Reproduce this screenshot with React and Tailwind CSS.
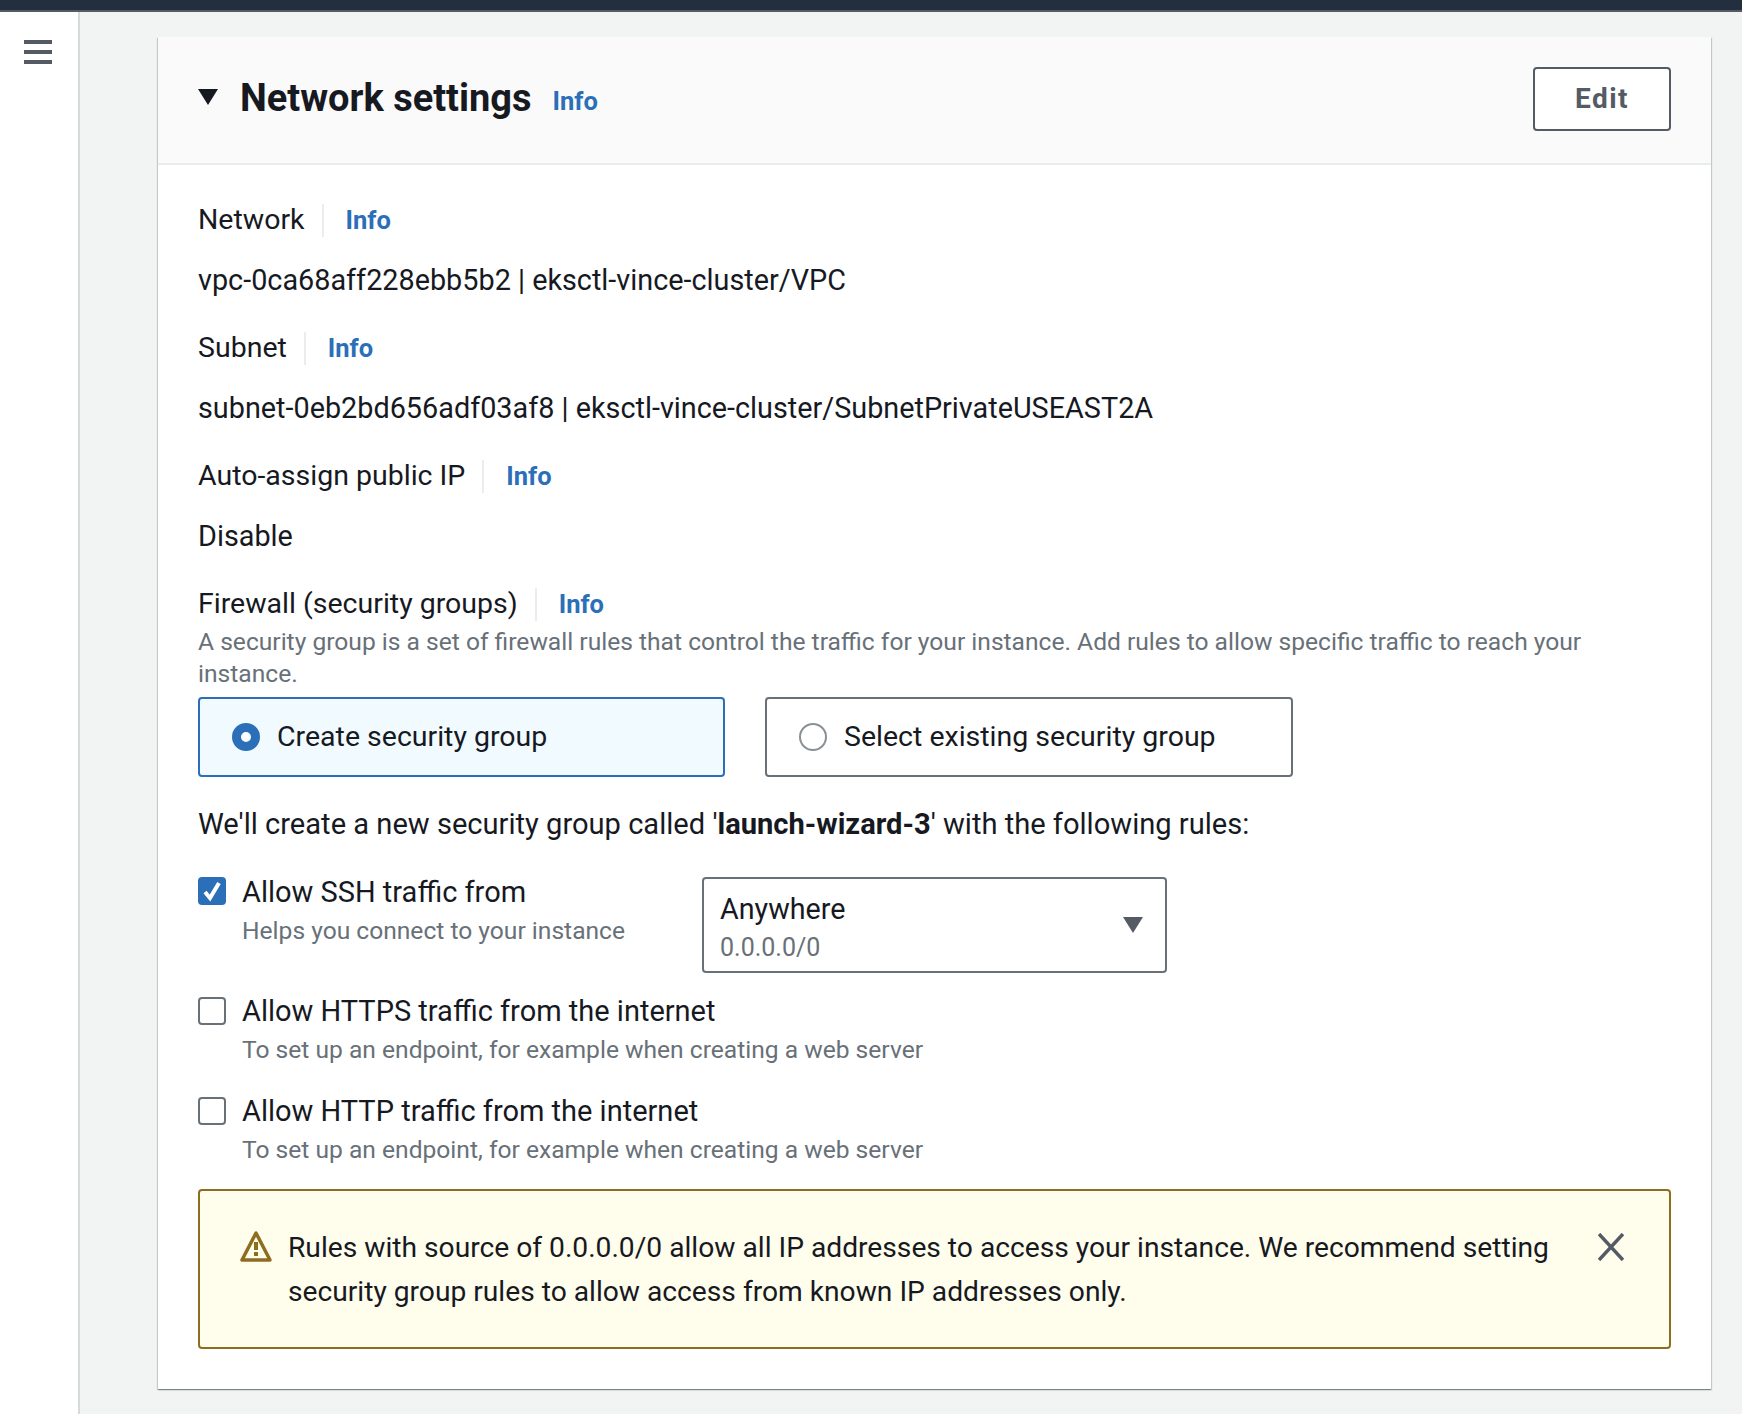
import React from 'react';

const FONT = 'font-["Roboto",sans-serif]';

function Info() {
  return <a className="text-[25.5px] font-bold text-[#2b6fb8] leading-[40px]">Info</a>;
}

function FieldLabel({ children }) {
  return (
    <div className="flex items-center h-[40px]">
      <span className="leading-[40px] text-[28.5px]">{children}</span>
      <span className="w-[2px] h-[33px] bg-[#eaeded] ml-[17px] mr-[22px]" />
      <Info />
    </div>
  );
}

function Field({ label, value }) {
  return (
    <div className="mb-[28px]">
      <FieldLabel>{label}</FieldLabel>
      <div className="mt-[20px] leading-[40px] text-[28.8px]">{value}</div>
    </div>
  );
}

function Radio({ label, selected }) {
  return (
    <div
      className={`h-[80px] rounded-[4px] border-2 flex items-center pl-[32px] gap-[17px] ${
        selected ? 'w-[527px] border-[#2b6fb8] bg-[#f1faff]' : 'w-[528px] border-[#687078] bg-white'
      }`}
    >
      {selected ? (
        <span className="w-[28px] h-[28px] rounded-full border-[9px] border-[#2b6fb8] bg-white" />
      ) : (
        <span className="w-[28px] h-[28px] rounded-full border-2 border-[#879196] bg-white" />
      )}
      <span className="text-[28.5px]">{label}</span>
    </div>
  );
}

function Check({ checked, label, hint }) {
  return (
    <div className="flex gap-[16px]">
      {checked ? (
        <span className="w-[28px] h-[28px] mt-[-1px] rounded-[4px] bg-[#2b6fb8] flex items-center justify-center shrink-0">
          <svg width="20" height="22" viewBox="0 0 20 22" fill="none" stroke="#fff" strokeWidth="4">
            <path d="M3 12l5 6L17 3" />
          </svg>
        </span>
      ) : (
        <span className="w-[28px] h-[28px] rounded-[4px] border-2 border-[#687078] bg-white shrink-0" />
      )}
      <div>
        <div className="leading-[28px] text-[29px]">{label}</div>
        <div className="text-[#687078] text-[24.6px] leading-[32px] mt-[9px]">{hint}</div>
      </div>
    </div>
  );
}

export default function App() {
  return (
    <div className={`${FONT} min-h-[1414px] bg-[#f2f3f3] text-[#16191f] text-[28.7px] overflow-hidden`}>
      <div className="h-[12px] bg-[#232f3e] border-b-2 border-[#545b64]" />
      <div className="flex">
        {/* Side rail */}
        <div className="w-[80px] min-h-[1402px] bg-white border-r-2 border-[#d5dbdb] pt-[28px] pl-[24px]">
          <div className="w-[28px] flex flex-col gap-[6px]">
            <span className="h-[4px] bg-[#545b64]" />
            <span className="h-[4px] bg-[#545b64]" />
            <span className="h-[4px] bg-[#545b64]" />
          </div>
        </div>

        {/* Panel */}
        <div className="w-[1553px] ml-[78px] mt-[25px] h-[1352px] bg-white shadow-[0_1px_1px_0_rgba(0,28,36,0.3),1px_1px_1px_0_rgba(0,28,36,0.15),-1px_1px_1px_0_rgba(0,28,36,0.15)]">
          <div className="h-[128px] bg-[#fafafa] border-b-2 border-[#eaeded] pl-[40px] pr-[40px] pb-[2px] flex items-center">
            <svg width="20" height="16" viewBox="0 0 20 16" className="mr-[22px] mb-[4px]">
              <path d="M0 0h20L10 16z" fill="#16191f" />
            </svg>
            <h2 className="text-[38px] font-bold leading-[44px] mb-[2px]">Network settings</h2>
            <span className="ml-[21px] mt-[4px]"><Info /></span>
            <button className="ml-auto w-[138px] h-[64px] rounded-[4px] border-2 border-[#545b64] bg-white text-[#545b64] text-[28px] tracking-[1.5px] font-bold">
              Edit
            </button>
          </div>

          <div className="pl-[40px] pr-[40px] pt-[35px]">
            <Field label="Network" value="vpc-0ca68aff228ebb5b2 | eksctl-vince-cluster/VPC" />
            <Field label="Subnet" value="subnet-0eb2bd656adf03af8 | eksctl-vince-cluster/SubnetPrivateUSEAST2A" />
            <Field label="Auto-assign public IP" value="Disable" />

            <FieldLabel>Firewall (security groups)</FieldLabel>
            <p className="mt-[2px] text-[24.6px] leading-[32px] text-[#687078] max-w-[1440px]">
              A security group is a set of firewall rules that control the traffic for your instance. Add rules to allow specific traffic to reach your instance.
            </p>

            <div className="flex gap-[40px] mt-[7px]">
              <Radio label="Create security group" selected />
              <Radio label="Select existing security group" />
            </div>

            <p className="mt-[27px] leading-[40px] text-[29.1px]">
              We'll create a new security group called '<b>launch-wizard-3</b>' with the following rules:
            </p>

            <div className="flex mt-[33px] h-[96px]">
              <div className="w-[504px] pt-[1px]">
                <Check checked label="Allow SSH traffic from" hint="Helps you connect to your instance" />
              </div>
              <div className="w-[465px] h-[96px] rounded-[4px] border-2 border-[#687078] pl-[16px] pr-[22px] pt-[6px] flex items-center justify-between">
                <div>
                  <div className="leading-[38px]">Anywhere</div>
                  <div className="text-[25px] text-[#687078] leading-[38px] mt-[1px]">0.0.0.0/0</div>
                </div>
                <svg width="20" height="16" viewBox="0 0 20 16" className="mb-[6px]">
                  <path d="M0 0h20L10 16z" fill="#545b64" />
                </svg>
              </div>
            </div>

            <div className="mt-[24px]">
              <Check label="Allow HTTPS traffic from the internet" hint="To set up an endpoint, for example when creating a web server" />
            </div>
            <div className="mt-[31px]">
              <Check label="Allow HTTP traffic from the internet" hint="To set up an endpoint, for example when creating a web server" />
            </div>

            <div className="mt-[23px] h-[160px] rounded-[4px] border-2 border-[#8f6d20] bg-[#fffdec] flex pl-[40px] pr-[45px] pt-[35px]">
              <svg width="32" height="32" viewBox="0 0 32 32" fill="none" className="shrink-0 mt-[4px]">
                <path d="M16 3L2 30h28z" stroke="#8f6d20" strokeWidth="3.5" strokeLinejoin="round" />
                <path d="M14 12h4v8h-4zM14 22h4v4h-4z" fill="#8f6d20" />
              </svg>
              <p className="ml-[16px] leading-[44px] text-[28.2px] flex-1">
                Rules with source of 0.0.0.0/0 allow all IP addresses to access your instance. We recommend setting security group rules to allow access from known IP addresses only.
              </p>
              <svg width="26" height="28" viewBox="0 0 26 28" fill="none" stroke="#545b64" strokeWidth="3.5" className="shrink-0 mt-[7px] ml-[40px]">
                <path d="M1 1l24 26M25 1L1 27" />
              </svg>
            </div>
          </div>
        </div>
      </div>
    </div>
  );
}
